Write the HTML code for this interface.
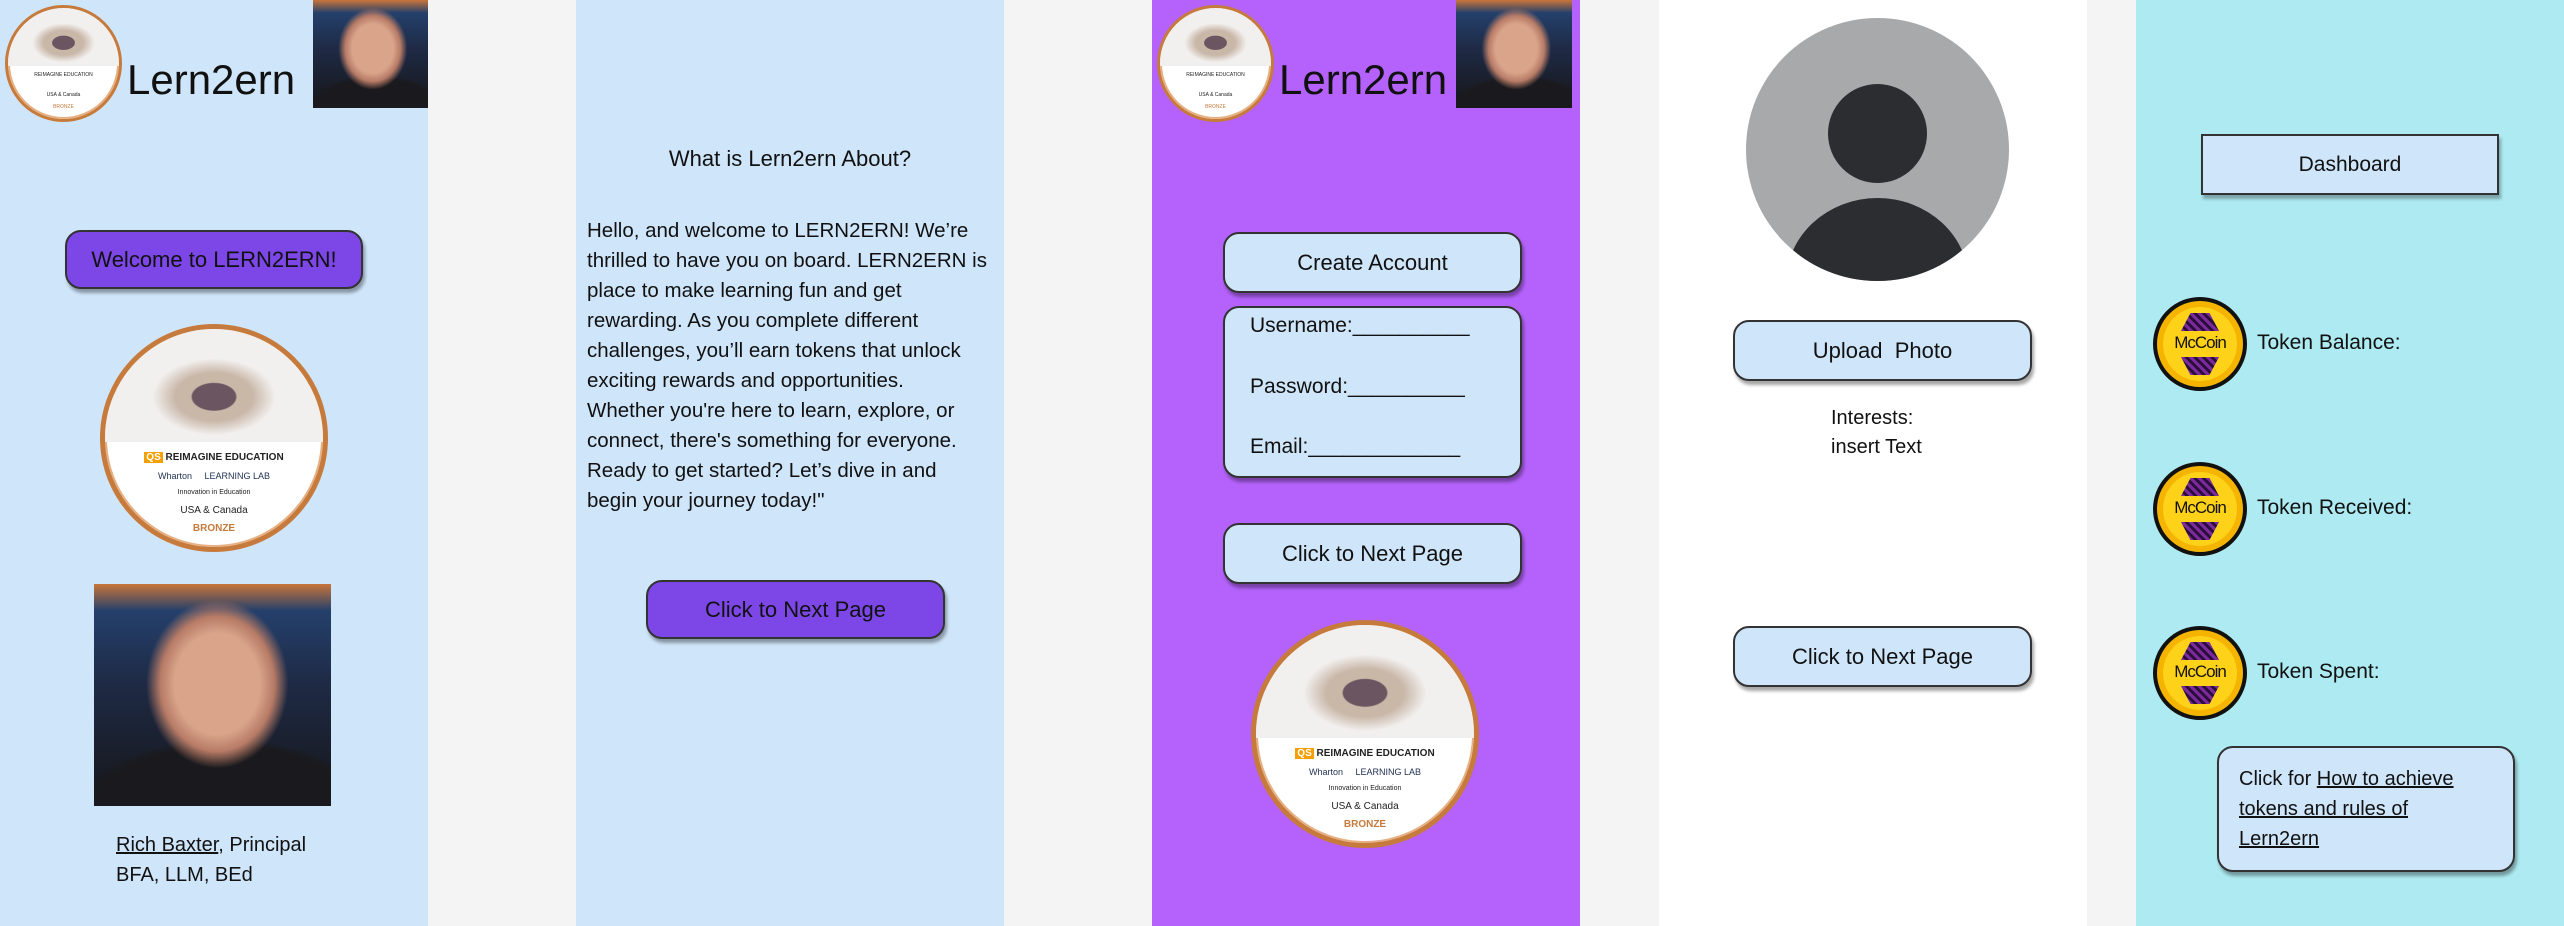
<!DOCTYPE html>
<html><head><meta charset="utf-8"><style>
*{margin:0;padding:0;box-sizing:border-box}
body{width:2564px;height:926px;background:#f4f4f4;position:relative;overflow:hidden;font-family:"Liberation Sans",sans-serif;color:#111}
.p{position:absolute;top:0;height:926px}
.a{position:absolute}
.btn{position:absolute;border:2px solid #333;border-radius:16px;display:flex;align-items:center;justify-content:center;font-size:22px;box-shadow:2px 4px 3px rgba(0,0,0,.35)}
.pur{background:#7c47e6}
.lb{background:#cfe5f9}
.badge{position:absolute;border-radius:50%;background:#fff;border:5px solid #c67a3c;overflow:hidden;box-shadow:0 0 0 2px #e7b083 inset}
.badge .top{position:absolute;left:0;right:0;top:0;height:52%;background:radial-gradient(ellipse at 50% 60%,#6b5560 0 14%,#c9b7a8 15% 25%,#f2f0ef 40%)}
.badge .t{position:absolute;left:0;right:0;text-align:center;font-size:10px;color:#222}
.photo{position:absolute;background:radial-gradient(ellipse 30% 38% at 52% 45%,#d9a48a 0 60%,#b77b66 80%,transparent 100%),radial-gradient(ellipse 60% 30% at 55% 100%,#1a1a1e 0 90%,transparent 100%),linear-gradient(180deg,#c8753a 0,#24406b 12%,#1e2a45 45%,#161618 100%)}
.logo{font-size:42px;position:absolute;top:56px}
.coin{position:absolute;width:94px;height:94px;border-radius:50%;background:#ffd21a;border:4px solid #111;box-shadow:inset 0 0 0 6px #f5b400}
.coin .h{position:absolute;left:24px;right:24px;height:18px;background:repeating-linear-gradient(45deg,#7a2a9a 0 3px,#2a0d3a 3px 6px)}
.coin .h1{top:12px;clip-path:polygon(25% 0,75% 0,100% 100%,0 100%)}
.coin .h2{bottom:12px;clip-path:polygon(0 0,100% 0,75% 100%,25% 100%)}
.coin span{position:absolute;left:0;right:0;top:32px;text-align:center;font-size:17px;letter-spacing:-1px}
.tl{position:absolute;font-size:21px}
u{text-decoration:underline}
</style></head><body>

<div class="p" style="left:0;width:428px;background:#cfe5f9">
  <div class="badge" style="left:5px;top:5px;width:117px;height:117px;border-width:3px"><div class="top"></div><div class="t" style="top:64px;font-size:5px">REIMAGINE EDUCATION</div><div class="t" style="top:84px;font-size:5px">USA &amp; Canada</div><div class="t" style="top:96px;font-size:5px;color:#c67a3c">BRONZE</div></div>
  <div class="logo" style="left:127px">Lern2ern</div>
  <div class="photo" style="left:313px;top:0;width:115px;height:108px"></div>
  <div class="btn pur" style="left:65px;top:230px;width:298px;height:59px">Welcome to LERN2ERN!</div>
  <div class="badge" style="left:100px;top:324px;width:228px;height:228px"><div class="top"></div>
    <div class="t" style="top:123px;font-size:10px;font-weight:bold"><span style="background:#f5a000;color:#fff;padding:0 2px">QS</span> REIMAGINE EDUCATION</div>
    <div class="t" style="top:142px;font-size:9px;color:#235">Wharton &nbsp;&nbsp;&nbsp; LEARNING LAB</div>
    <div class="t" style="top:160px;font-size:7px">Innovation in Education</div>
    <div class="t" style="top:176px;font-size:10px">USA &amp; Canada</div>
    <div class="t" style="top:194px;font-size:10px;color:#c67a3c;font-weight:bold">BRONZE</div></div>
  <div class="photo" style="left:94px;top:584px;width:237px;height:222px"></div>
  <div class="tl" style="left:116px;top:830px;line-height:30px;font-size:20px"><u>Rich Baxter</u>, Principal<br>BFA, LLM, BEd</div>
</div>

<div class="p" style="left:576px;width:428px;background:#cfe5f9">
  <div class="a" style="left:0;right:0;top:146px;text-align:center;font-size:22px">What is Lern2ern About?</div>
  <div class="a" style="left:11px;top:216px;font-size:20.5px;line-height:30px;white-space:nowrap">Hello, and welcome to LERN2ERN! We’re<br>thrilled to have you on board. LERN2ERN is<br>place to make learning fun and get<br>rewarding. As you complete different<br>challenges, you’ll earn tokens that unlock<br>exciting rewards and opportunities.<br>Whether you're here to learn, explore, or<br>connect, there's something for everyone.<br>Ready to get started? Let’s dive in and<br>begin your journey today!"</div>
  <div class="btn pur" style="left:70px;top:580px;width:299px;height:59px">Click to Next Page</div>
</div>

<div class="p" style="left:1152px;width:428px;background:#b462fb">
  <div class="badge" style="left:5px;top:5px;width:117px;height:117px;border-width:3px"><div class="top"></div><div class="t" style="top:64px;font-size:5px">REIMAGINE EDUCATION</div><div class="t" style="top:84px;font-size:5px">USA &amp; Canada</div><div class="t" style="top:96px;font-size:5px;color:#c67a3c">BRONZE</div></div>
  <div class="logo" style="left:127px">Lern2ern</div>
  <div class="photo" style="left:304px;top:0;width:116px;height:108px"></div>
  <div class="btn lb" style="left:71px;top:232px;width:299px;height:61px">Create Account</div>
  <div class="btn lb" style="left:71px;top:306px;width:299px;height:172px;display:block;font-size:21px">
    <div class="a" style="left:25px;top:6px">Username:__________</div>
    <div class="a" style="left:25px;top:67px">Password:__________</div>
    <div class="a" style="left:25px;top:127px">Email:_____________</div></div>
  <div class="btn lb" style="left:71px;top:523px;width:299px;height:61px">Click to Next Page</div>
  <div class="badge" style="left:99px;top:620px;width:228px;height:228px"><div class="top"></div>
    <div class="t" style="top:123px;font-size:10px;font-weight:bold"><span style="background:#f5a000;color:#fff;padding:0 2px">QS</span> REIMAGINE EDUCATION</div>
    <div class="t" style="top:142px;font-size:9px;color:#235">Wharton &nbsp;&nbsp;&nbsp; LEARNING LAB</div>
    <div class="t" style="top:160px;font-size:7px">Innovation in Education</div>
    <div class="t" style="top:176px;font-size:10px">USA &amp; Canada</div>
    <div class="t" style="top:194px;font-size:10px;color:#c67a3c;font-weight:bold">BRONZE</div></div>
</div>

<div class="p" style="left:1659px;width:428px;background:#fff">
  <div class="a" style="left:87px;top:18px;width:263px;height:263px;border-radius:50%;background:#a8a9ab;overflow:hidden">
    <div class="a" style="left:82px;top:66px;width:99px;height:99px;border-radius:50%;background:#2b2d31"></div>
    <div class="a" style="left:40px;top:180px;width:183px;height:170px;border-radius:50%;background:#2b2d31"></div>
  </div>
  <div class="btn lb" style="left:74px;top:320px;width:299px;height:61px">Upload&nbsp; Photo</div>
  <div class="a" style="left:172px;top:404px;font-size:20px;line-height:29px">Interests:<br>insert Text</div>
  <div class="btn lb" style="left:74px;top:626px;width:299px;height:61px">Click to Next Page</div>
</div>

<div class="p" style="left:2136px;width:428px;background:#aeeaf1">
  <div class="a lb" style="left:65px;top:134px;width:298px;height:61px;border:2px solid #333;display:flex;align-items:center;justify-content:center;font-size:21px;box-shadow:2px 4px 3px rgba(0,0,0,.3)">Dashboard</div>
  <div class="coin" style="left:17px;top:297px"><div class="h h1"></div><span>McCoin</span><div class="h h2"></div></div>
  <div class="tl" style="left:121px;top:331px">Token Balance:</div>
  <div class="coin" style="left:17px;top:462px"><div class="h h1"></div><span>McCoin</span><div class="h h2"></div></div>
  <div class="tl" style="left:121px;top:496px">Token Received:</div>
  <div class="coin" style="left:17px;top:626px"><div class="h h1"></div><span>McCoin</span><div class="h h2"></div></div>
  <div class="tl" style="left:121px;top:660px">Token Spent:</div>
  <div class="btn lb" style="left:81px;top:746px;width:298px;height:126px;display:block;font-size:20px;line-height:30px;padding:16px 0 0 20px">Click for <u>How to achieve<br>tokens and rules of<br>Lern2ern</u></div>
</div>
</body></html>
